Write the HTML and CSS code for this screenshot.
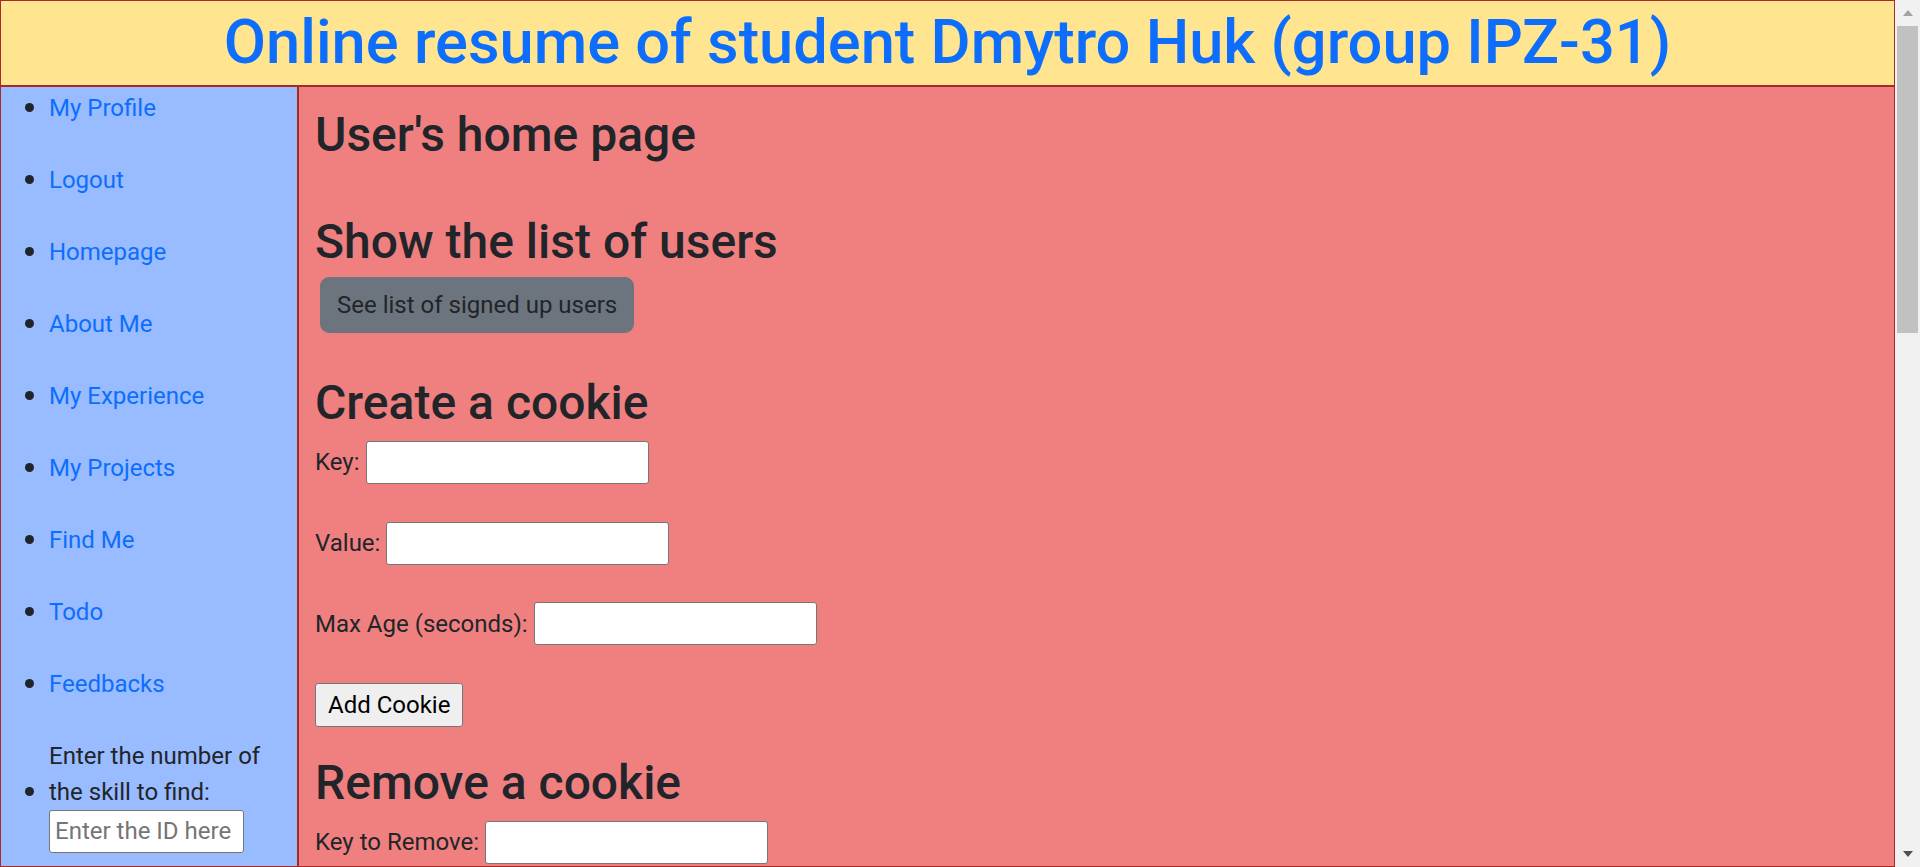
FILE: index.html
```html
<!DOCTYPE html>
<html lang="en">
<head>
<meta charset="utf-8">
<title>Online resume of student Dmytro Huk</title>
<link rel="stylesheet" href="styles.css">
</head>
<body>
<div class="page">
  <header class="site-header">
    <h1 class="site-title">Online resume of student Dmytro Huk (group IPZ-31)</h1>
  </header>
  <div class="layout">
    <nav class="sidebar">
      <ul class="nav-list">
        <li><a href="#">My Profile</a></li>
        <li><a href="#">Logout</a></li>
        <li><a href="#">Homepage</a></li>
        <li><a href="#">About Me</a></li>
        <li><a href="#">My Experience</a></li>
        <li><a href="#">My Projects</a></li>
        <li><a href="#">Find Me</a></li>
        <li><a href="#">Todo</a></li>
        <li><a href="#">Feedbacks</a></li>
        <li class="search-item"><label class="search-label" for="skill-id">Enter the number of the skill to find:</label><input id="skill-id" class="search-input" type="text" placeholder="Enter the ID here"></li>
      </ul>
    </nav>
    <main class="content">
      <h2 class="heading heading-intro">User's home page</h2>
      <h2 class="heading heading-tight">Show the list of users</h2>
      <button class="btn-users" type="button">See list of signed up users</button>
      <h2 class="heading">Create a cookie</h2>
      <form class="cookie-form">
        <div class="form-row"><label for="key">Key:</label><input id="key" class="field" type="text"></div>
        <div class="form-row"><label for="value">Value:</label><input id="value" class="field" type="text"></div>
        <div class="form-row"><label for="age">Max Age (seconds):</label><input id="age" class="field" type="text"></div>
        <div class="form-row"><button class="btn-plain" type="button">Add Cookie</button></div>
      </form>
      <h2 class="heading">Remove a cookie</h2>
      <form class="cookie-form">
        <div class="form-row"><label for="rkey">Key to Remove:</label><input id="rkey" class="field" type="text"></div>
      </form>
    </main>
  </div>
</div>
<div class="scrollbar">
  <div class="sb-btn"><span class="sb-arrow-up"></span></div>
  <div class="sb-thumb"></div>
  <div class="sb-track"></div>
  <div class="sb-btn sb-btn-bottom"><span class="sb-arrow-down"></span></div>
</div>
</body>
</html>
```

FILE: styles.css
```css
html, body {
  margin: 0;
  height: 100%;
  overflow: hidden;
}

body {
  display: flex;
  font-family: "Segoe UI", Roboto, "Liberation Sans", sans-serif;
  font-size: 24px;
  line-height: 36px;
  color: #212529;
  background: #ffffff;
}

.page {
  flex: 1;
  min-width: 0;
  display: flex;
  flex-direction: column;
  overflow: hidden;
}

.site-header {
  background: #ffe58f;
  border: 1px solid #a52a2a;
}

.site-title {
  margin: 0 0 7px;
  padding-top: 5px;
  font-size: 61.4px;
  line-height: 72px;
  font-weight: 500;
  color: #0d6efd;
  text-align: center;
}

.layout {
  flex: 1;
  display: flex;
  min-height: 0;
}

.sidebar {
  width: 298px;
  flex: none;
  box-sizing: border-box;
  background: #99bbff;
  border: 1px solid #a52a2a;
}

.nav-list {
  margin: 0;
  padding: 2.5px 0 0 48px;
  list-style: none;
}

.nav-list li {
  margin-bottom: 36px;
}

.nav-list li::before {
  content: "";
  display: inline-block;
  width: 9px;
  height: 9px;
  margin: 0 15px 0 -24px;
  border-radius: 50%;
  background: #212529;
  vertical-align: 4px;
}

.nav-list a {
  color: #0d6efd;
  text-decoration: none;
}

.search-label {
  display: inline-block;
}

.search-input {
  display: block;
  box-sizing: border-box;
  width: 195px;
  height: 43px;
  margin: 0;
  padding: 2px 5px;
  font: inherit;
  color: #212529;
  background: #ffffff;
  border: 1px solid #767676;
  border-radius: 3px;
}

.search-input::placeholder {
  color: #757575;
}

.content {
  flex: 1;
  min-width: 0;
  background: #f08080;
  border: 1px solid #a52a2a;
  padding: 14px 16px 0;
}

.heading {
  margin: 0 0 9px;
  padding-top: 5px;
  font-size: 48px;
  line-height: 57.6px;
  font-weight: 500;
}

.heading-intro {
  margin-bottom: 44px;
}

.heading-tight {
  margin-bottom: 7px;
}

.btn-users {
  display: block;
  box-sizing: border-box;
  height: 56px;
  margin: 0 0 36px 5px;
  padding: 0 16px;
  font: inherit;
  color: #212529;
  background: #6c757d;
  border: 1px solid #6c757d;
  border-radius: 9px;
}

.cookie-form {
  margin: 0 0 22px;
}

.form-row {
  display: flex;
  align-items: center;
  gap: 6px;
  margin-bottom: 37.8px;
}

.form-row:last-child {
  margin-bottom: 0;
}

.field {
  box-sizing: border-box;
  width: 283px;
  height: 43px;
  margin: 0;
  padding: 2px 4px;
  font: inherit;
  background: #ffffff;
  border: 1px solid #767676;
  border-radius: 3px;
}

.btn-plain {
  box-sizing: border-box;
  height: 44px;
  margin: 0;
  padding: 0 12px;
  font: inherit;
  color: #000000;
  background: #efefef;
  border: 1px solid #767676;
  border-radius: 3px;
}

.scrollbar {
  width: 25px;
  flex: none;
  display: flex;
  flex-direction: column;
  align-items: center;
  background: #f1f1f1;
}

.sb-btn {
  height: 26px;
  width: 100%;
  display: flex;
  align-items: center;
  justify-content: center;
}

.sb-btn-bottom {
  height: 30px;
  align-items: flex-start;
}

.sb-arrow-up {
  width: 0;
  height: 0;
  border-left: 5.5px solid transparent;
  border-right: 5.5px solid transparent;
  border-bottom: 6px solid #a3a3a3;
}

.sb-arrow-down {
  width: 0;
  height: 0;
  margin-top: 14px;
  border-left: 5.5px solid transparent;
  border-right: 5.5px solid transparent;
  border-top: 6px solid #505050;
}

.sb-thumb {
  width: 21px;
  height: 307px;
  background: #c1c1c1;
}

.sb-track {
  flex: 1;
}
```
